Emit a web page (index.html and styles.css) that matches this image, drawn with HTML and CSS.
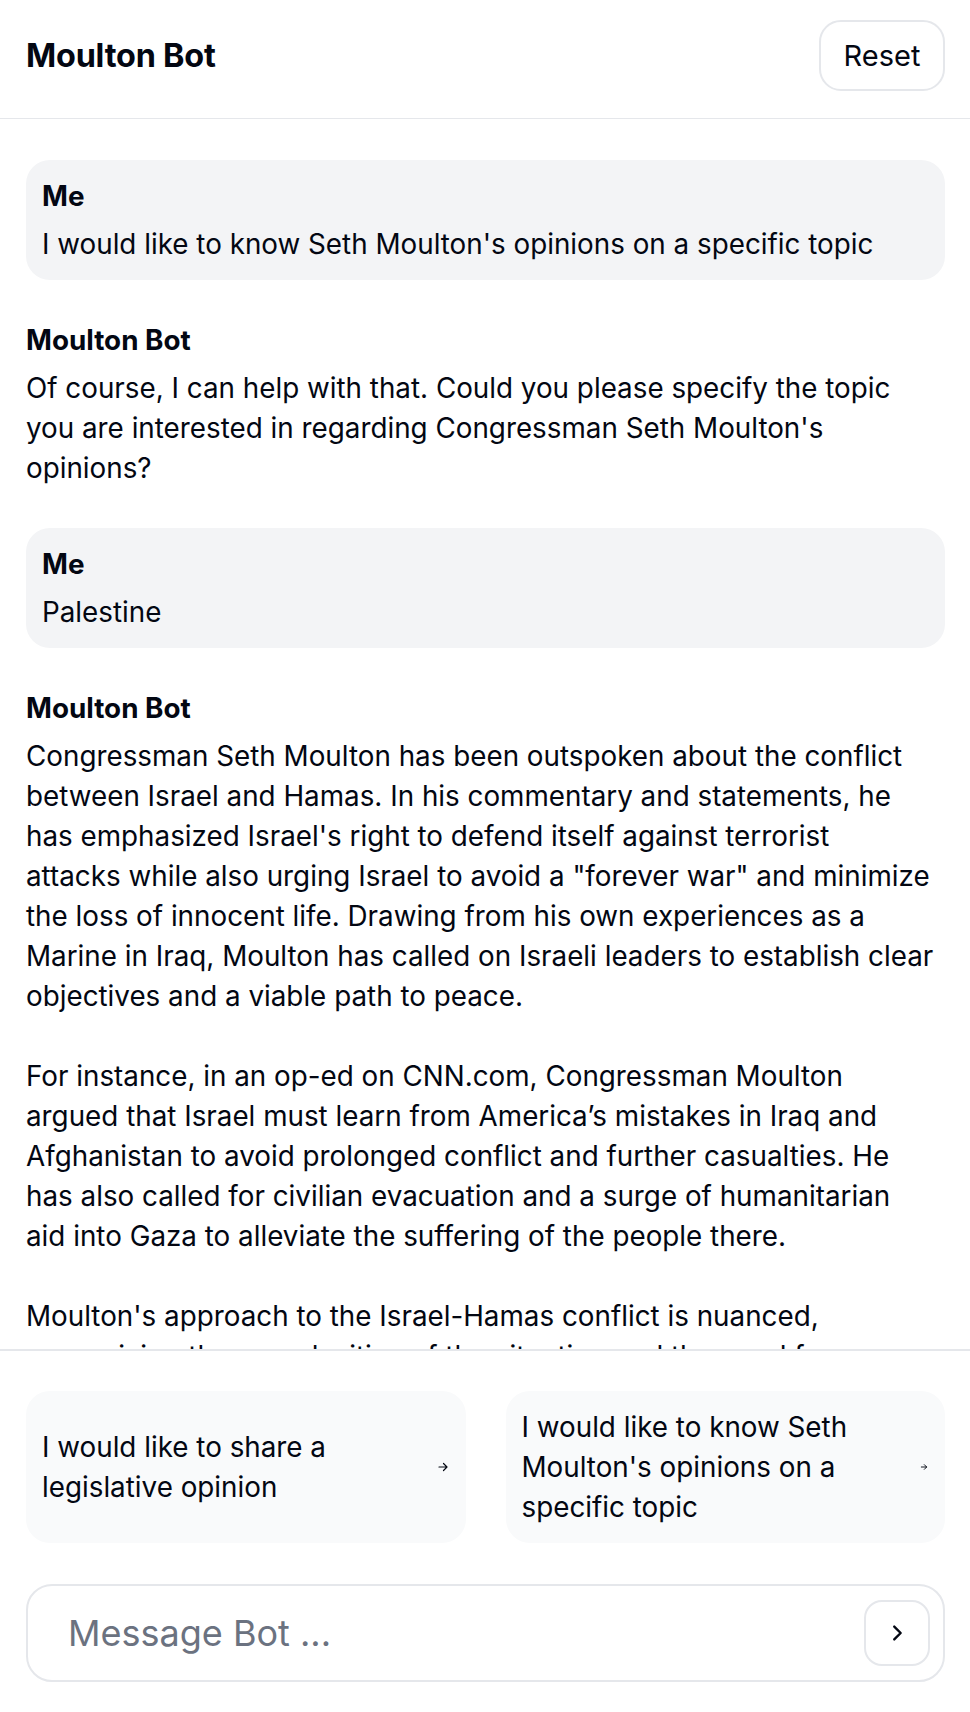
FILE: index.html
```html
<!DOCTYPE html>
<html lang="en">
<head>
<meta charset="utf-8">
<title>Moulton Bot</title>
<link rel="stylesheet" href="styles.css">
</head>
<body>
<div class="app">
  <header class="header">
    <h1 class="title">Moulton Bot</h1>
    <button class="reset">Reset</button>
  </header>
  <main class="chat">
    <div class="msg msg-me">
      <div class="name">Me</div>
      <div class="text">I would like to know Seth Moulton's opinions on a specific topic</div>
    </div>
    <div class="msg msg-bot">
      <div class="name">Moulton Bot</div>
      <div class="text">Of course, I can help with that. Could you please specify the topic you are interested in regarding Congressman Seth Moulton's opinions?</div>
    </div>
    <div class="msg msg-me">
      <div class="name">Me</div>
      <div class="text">Palestine</div>
    </div>
    <div class="msg msg-bot">
      <div class="name">Moulton Bot</div>
      <div class="text">Congressman Seth Moulton has been outspoken about the conflict
between Israel and Hamas. In his commentary and statements, he
has emphasized Israel's right to defend itself against terrorist
attacks while also urging Israel to avoid a "forever war" and minimize
the loss of innocent life. Drawing from his own experiences as a
Marine in Iraq, Moulton has called on Israeli leaders to establish clear
objectives and a viable path to peace.

For instance, in an op-ed on CNN.com, Congressman Moulton
argued that Israel must learn from America’s mistakes in Iraq and
Afghanistan to avoid prolonged conflict and further casualties. He
has also called for civilian evacuation and a surge of humanitarian
aid into Gaza to alleviate the suffering of the people there.

Moulton's approach to the Israel-Hamas conflict is nuanced,
recognizing the complexities of the situation and the need for
both security and humanitarian relief.</div>
    </div>
  </main>
  <footer class="footer">
    <div class="suggestions">
      <button class="suggestion">
        <span class="s-text">I would like to share a legislative opinion</span>
        <svg class="s-arrow s-arrow-lg" viewBox="0 0 12 12" aria-hidden="true"><path d="M2 6h8M6.5 2.5 10 6l-3.5 3.5" fill="none" stroke="currentColor" stroke-width="1.2" stroke-linecap="round" stroke-linejoin="round"/></svg>
      </button>
      <button class="suggestion">
        <span class="s-text">I would like to know Seth Moulton's opinions on a specific topic</span>
        <svg class="s-arrow s-arrow-sm" viewBox="0 0 12 12" aria-hidden="true"><path d="M2 6h8M6.5 2.5 10 6l-3.5 3.5" fill="none" stroke="currentColor" stroke-width="1.4" stroke-linecap="round" stroke-linejoin="round"/></svg>
      </button>
    </div>
    <div class="composer">
      <span class="placeholder">Message Bot ...</span>
      <button class="send" aria-label="Send">
        <svg viewBox="0 0 24 24" aria-hidden="true"><path d="M9 5l7 7-7 7" fill="none" stroke="currentColor" stroke-width="2.6" stroke-linecap="round" stroke-linejoin="round"/></svg>
      </button>
    </div>
  </footer>
</div>
</body>
</html>
```
FILE: styles.css
```css
* { box-sizing: border-box; }
html, body { margin: 0; padding: 0; }
body {
  font-family: Inter, "Noto Sans", "Liberation Sans", sans-serif;
  color: #030712;
  background: #ffffff;
}
.app {
  height: 1712px;
  display: flex;
  flex-direction: column;
  overflow: hidden;
}
.header {
  height: 119px;
  flex: none;
  display: flex;
  align-items: center;
  justify-content: space-between;
  padding: 0 25px 8px 26px;
  border-bottom: 1px solid #e5e7eb;
}
.title {
  margin: 0;
  font-size: 32.4px;
  font-weight: 700;
  letter-spacing: -0.2px;
}
.reset {
  font-family: inherit;
  font-size: 29px;
  color: #030712;
  background: #fff;
  border: 2px solid #e5e7eb;
  border-radius: 22px;
  width: 126px;
  height: 71px;
  padding: 0;
}
.chat {
  flex: 1;
  overflow: hidden;
  padding: 41px 25px 0 26px;
  display: flex;
  flex-direction: column;
  gap: 40px;
}
.msg { flex: none; }
.name {
  font-size: 27.8px;
  font-weight: 700;
  line-height: 40px;
  margin-bottom: 8px;
}
.text {
  font-size: 27.8px;
  line-height: 40px;
  white-space: pre-line;
}
.msg-me {
  background: #f3f4f6;
  border-radius: 24px;
  padding: 16px 16px;
}
.footer {
  flex: none;
  border-top: 2px solid #e5e7eb;
  padding: 40px 25px 30px 26px;
  display: flex;
  flex-direction: column;
  gap: 41px;
}
.suggestions {
  display: grid;
  grid-template-columns: 1fr 1fr;
  gap: 40px;
}
.suggestion {
  font-family: inherit;
  color: #030712;
  text-align: left;
  background: #f9fafb;
  border: none;
  border-radius: 24px;
  height: 152px;
  padding: 16px 17px 16px 16px;
  display: flex;
  align-items: center;
  gap: 20px;
}
.s-text {
  flex: 1;
  font-size: 27.8px;
  line-height: 40px;
}
.s-arrow { flex: none; color: #030712; }
.s-arrow-lg { width: 12px; height: 12px; }
.s-arrow-sm { width: 8px; height: 8px; }
.composer {
  height: 98px;
  border: 2px solid #e5e7eb;
  border-radius: 26px;
  display: flex;
  align-items: center;
  justify-content: space-between;
  padding: 0 13px 0 40px;
}
.placeholder {
  font-size: 36px;
  color: #6b7280;
}
.send {
  width: 66px;
  height: 66px;
  border: 2px solid #e5e7eb;
  border-radius: 18px;
  background: #fff;
  display: flex;
  align-items: center;
  justify-content: center;
  padding: 0;
  color: #030712;
}
.send svg { width: 22px; height: 22px; }
```
